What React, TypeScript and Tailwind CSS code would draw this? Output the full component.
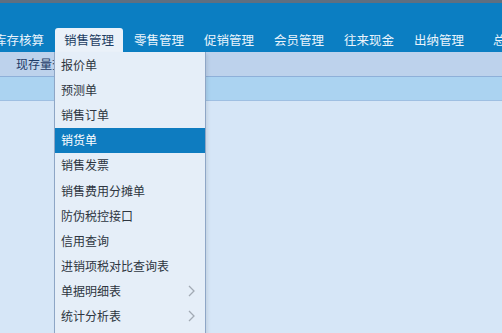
import React from "react";

const navItems = ["库存核算", "销售管理", "零售管理", "促销管理", "会员管理", "往来现金", "出纳管理"];
const menu: { label: string; sub?: boolean; active?: boolean }[] = [
  { label: "报价单" },
  { label: "预测单" },
  { label: "销售订单" },
  { label: "销货单", active: true },
  { label: "销售发票" },
  { label: "销售费用分摊单" },
  { label: "防伪税控接口" },
  { label: "信用查询" },
  { label: "进销项税对比查询表" },
  { label: "单据明细表", sub: true },
  { label: "统计分析表", sub: true },
];

export default function App() {
  return (
    <div
      className="relative w-[502px] h-[333px] overflow-hidden bg-[#d6e6f7] text-[12px]"
      style={{ fontFamily: '"Noto Sans CJK SC", "Noto Sans", sans-serif' }}
    >
      <div className="h-[3px] bg-[#5f6f80]" />
      <div className="h-[49px] bg-[#0b7ec2] flex items-end">
        <div className="flex ml-[-16px] items-end">
          {navItems.map((n, i) =>
            i === 1 ? (
              <div key={n} className="w-[70px] flex justify-center">
                <div className="w-[68px] h-[24px] bg-[#eaf1f9] rounded-t-[3px] flex items-center justify-center text-[#1f3f63] text-[12.5px]">
                  {n}
                </div>
              </div>
            ) : (
              <div key={n} className="w-[70px] h-[24px] flex items-center justify-center text-[#eaf4fc] text-[12.5px]">
                {n}
              </div>
            )
          )}
          <div className="h-[24px] flex items-center pl-[19px] text-[#eaf4fc] text-[12.5px] whitespace-nowrap">
            总账管理
          </div>
        </div>
      </div>
      <div className="h-[24px] bg-[#bdd2ec] flex items-center pl-[16px] text-[#1c3a66]">现存量查询</div>
      <div className="h-[1px] bg-[#8eb0d9]" />
      <div className="h-[23px] bg-[#abd3f1]" />
      <div className="h-[1px] bg-[#9fbfe2]" />

      <div className="absolute left-[54px] top-[52px] w-[152px] h-[300px] bg-[#e5eef8] border-x border-[#8ea6c6] shadow-[2px_2px_3px_rgba(0,0,0,0.08)]">
        {menu.map((m) => (
          <div
            key={m.label}
            className={`h-[25.2px] flex items-center justify-between pl-[6px] pr-[10px] ${
              m.active ? "bg-[#0e7cc0] text-white" : "text-[#2d3540]"
            }`}
          >
            <span>{m.label}</span>
            {m.sub && (
              <svg width="7" height="12" viewBox="0 0 7 12" fill="none">
                <path d="M1 1 L6 6 L1 11" stroke="#a2aab4" strokeWidth="1.3" />
              </svg>
            )}
          </div>
        ))}
      </div>
    </div>
  );
}
